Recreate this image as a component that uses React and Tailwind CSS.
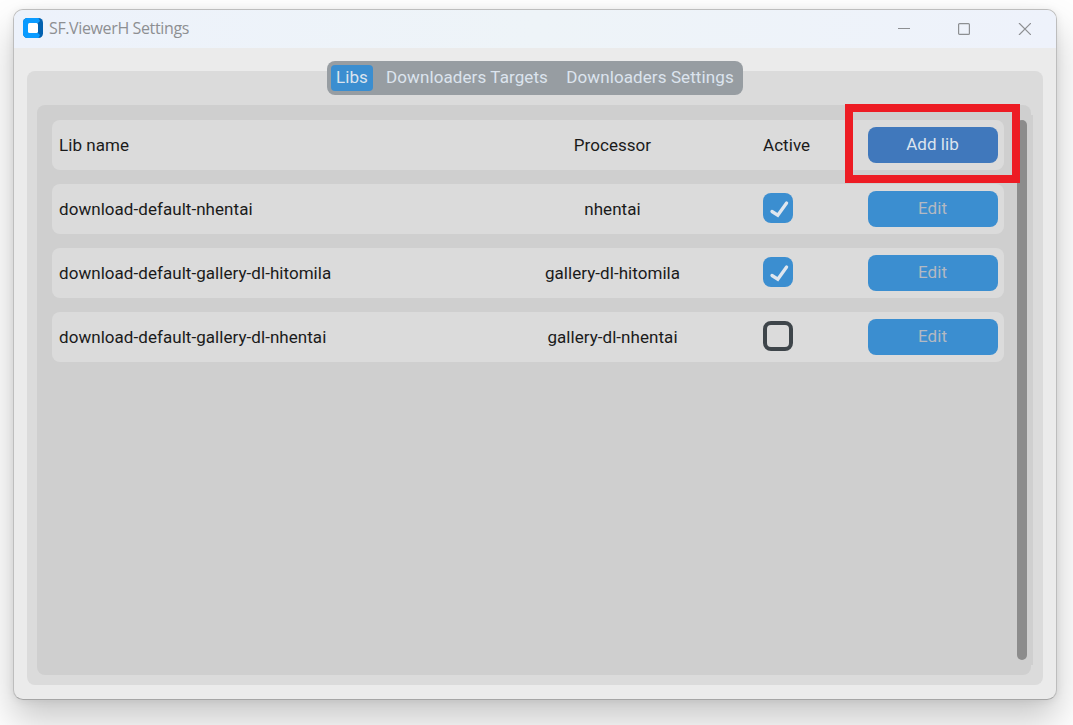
import React from "react";

const libs = [
  { name: "download-default-nhentai", processor: "nhentai", active: true },
  { name: "download-default-gallery-dl-hitomila", processor: "gallery-dl-hitomila", active: true },
  { name: "download-default-gallery-dl-nhentai", processor: "gallery-dl-nhentai", active: false },
];

function TitleBar() {
  return (
    <header className="flex h-[38px] shrink-0 items-center bg-linear-to-r from-[#edf2fb] via-[#eef4f8] to-[#eef2fb] pb-0.5 pl-[9px] text-[#8d8f92]">
      <svg width="20" height="20" viewBox="0 0 20 20" className="shrink-0">
        <rect width="20" height="20" rx="4.5" fill="#0261b0" />
        <path d="M4.500 0H15.500L17 3L14.500 5.500V14.500L17 17L15.500 20H4.500A4.500 4.500 0 0 1 0 15.500V4.500A4.500 4.500 0 0 1 4.500 0Z" fill="#0a9bff" />
        <path d="M14 5H16V15H14Z" fill="#0261b0" />
        <rect x="5" y="5" width="10" height="10" rx="1.5" fill="#fff" />
      </svg>
      <h1 className="ml-1.5 font-['Open_Sans',sans-serif] text-[16px] leading-5 tracking-[-0.37px] whitespace-nowrap">
        SF.ViewerH Settings
      </h1>
      <div className="ml-auto flex items-center gap-12 pr-[25px] pt-0.5">
        <svg width="12" height="12" viewBox="0 0 12 12" stroke="currentColor">
          <path d="M0 5.500H12" />
        </svg>
        <svg width="12" height="12" viewBox="0 0 12 12" fill="none" stroke="currentColor" strokeWidth="1.2">
          <rect x="0.600" y="0.600" width="10.800" height="10.800" rx="1" />
        </svg>
        <svg width="13" height="12" viewBox="0 0 13 12" stroke="currentColor" strokeWidth="1.2">
          <path d="M1 0L13 12M13 0L1 12" />
        </svg>
      </div>
    </header>
  );
}

function Checkbox({ checked }) {
  if (!checked) {
    return <span className="block size-[30px] rounded-lg border-4 border-[#3e454a]" />;
  }
  return (
    <span className="block size-[30px] rounded-lg bg-[#3b8ed0]">
      <svg width="30" height="30" viewBox="0 0 30 30" fill="none" stroke="#dfe6ee" strokeWidth="3.3" strokeLinecap="round">
        <path d="M9 18.500L14.800 22.200L23.600 10" />
      </svg>
    </span>
  );
}

function Row({ children }) {
  return (
    <div className="grid h-[50px] grid-cols-[446px_215px_148px_130px] items-center rounded-lg bg-[#dbdbdb] pl-[7px] pr-1.5 text-[#1a1a1a] [&>*]:whitespace-nowrap">
      {children}
    </div>
  );
}

export default function App() {
  return (
    <div className="h-[725px] w-[1073px] overflow-hidden bg-[#fefefe] pl-[13px] pt-[9px] font-['Roboto',sans-serif] text-[17px] leading-5 tracking-[0.05px]">
      <div className="relative flex h-[691px] w-[1044px] flex-col rounded-[10px] border border-[#bdbdbd] border-b-[#a5a5a5] bg-[#ebebeb] shadow-[0_20px_36px_rgba(0,0,0,0.21),0_1px_8px_rgba(0,0,0,0.08)] [&>header]:rounded-t-[9px]">
        <TitleBar />
        <main className="mx-[13px] mt-[23px] flex h-[614px] flex-col items-center rounded-lg bg-[#dbdbdb]">
          <nav className="-mt-2.5 flex h-[34px] w-[416px] shrink-0 items-center rounded-lg bg-[#979da2] px-1 text-[#dce4ee] tracking-[0.1px]">
            <span className="flex h-[26px] w-[42px] items-center justify-center rounded bg-[#3b8ed0] pb-0.5">Libs</span>
            <span className="flex w-[188px] justify-center pb-0.5">Downloaders Targets</span>
            <span className="flex w-[178px] justify-center pb-0.5">Downloaders Settings</span>
          </nav>
          <div className="mt-2.5 flex w-[996px] items-center">
            <section className="flex h-[570px] w-[994px] justify-between rounded-lg bg-[#cfcfcf] pb-[15px] pl-[15px] pr-1 pt-[15px]">
              <div className="flex w-[952px] flex-col gap-3.5">
                <Row>
                  <span>Lib name</span>
                  <span className="text-center">Processor</span>
                  <span className="pl-[43px]">Active</span>
                  <button className="flex h-9 items-center justify-center rounded-lg bg-[#4078bc] pb-0.5 pr-px text-[#dce4ee]">Add lib</button>
                </Row>
                {libs.map((lib) => (
                  <Row key={lib.name}>
                    <span>{lib.name}</span>
                    <span className="text-center">{lib.processor}</span>
                    <span className="pb-0.5 pl-[43px]">
                      <Checkbox checked={lib.active} />
                    </span>
                    <button className="flex h-9 items-center justify-center rounded-lg bg-[#3b8ed0] pb-0.5 pr-px text-[#b3b9c2]">Edit</button>
                  </Row>
                ))}
              </div>
              <div className="w-2.5 rounded-[5px] bg-[#8c8c8c]" />
            </section>
            <div className="h-[550px] w-0.5 bg-[#cfcfcf]" />
          </div>
        </main>
        <div className="absolute left-[831px] top-[94px] h-[79px] w-[175px] border-8 border-[#ed1c24]" />
      </div>
    </div>
  );
}
